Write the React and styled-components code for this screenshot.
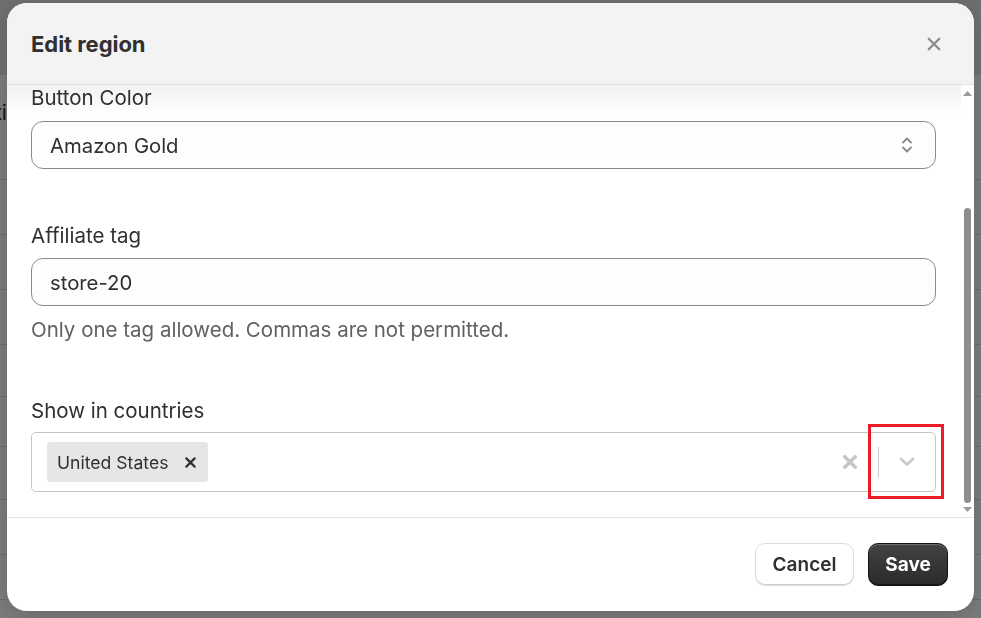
import React from 'react';
import styled, { createGlobalStyle } from 'styled-components';

const Global = createGlobalStyle`
  html, body { margin: 0; padding: 0; }
  body {
    width: 981px; height: 618px; overflow: hidden;
    font-family: Inter, "Noto Sans", Arial, sans-serif;
    background: #fff;
  }
  #root { width: 981px; height: 618px; position: relative; }
`;

/* ---------- underlying page (dimmed) ---------- */
const Page = styled.div`
  width: 981px; height: 618px;
  display: flex; flex-direction: column;
  background: #fff; overflow: hidden;
`;
const PageTop = styled.div`
  height: 75px; flex-shrink: 0; background: #e6e6e6;
`;
const PageRow = styled.div`
  height: ${p => p.$h}px; flex-shrink: 0; box-sizing: border-box;
  border-bottom: 1px solid #dedede;
  display: flex; align-items: flex-start;
  padding-top: ${p => p.$pt || 0}px;
  font-size: 21px; line-height: 24px; color: #303030;
`;
const PageHeading = styled.span`
  margin-left: -5px;
`;

/* ---------- overlay + modal ---------- */
const Backdrop = styled.div`
  position: fixed; inset: 0;
  background: rgba(0, 0, 0, 0.52);
  display: flex;
  padding: 3px 7px 7px 7px;
  box-sizing: border-box;
`;
const Modal = styled.div`
  flex: 1;
  background: #fff;
  border-radius: 20px;
  overflow: hidden;
  display: flex; flex-direction: column;
  box-shadow: 0 4px 20px rgba(0,0,0,0.15);
`;
const Header = styled.div`
  height: 82px; box-sizing: border-box; flex-shrink: 0;
  background: #f3f3f3;
  border-bottom: 1px solid #e3e3e3;
  display: flex; align-items: center; justify-content: space-between;
  padding: 0 33px 0 24px;
`;
const Title = styled.h2`
  margin: 0; font-size: 22px; font-weight: 700; color: #303030;
  letter-spacing: -0.05px;
`;
const CloseBtn = styled.button`
  border: 0; background: none; padding: 0; margin-top: 1px;
  width: 14px; height: 14px; display: flex; cursor: pointer;
`;
const Body = styled.div`
  height: 433px; box-sizing: border-box; flex-shrink: 0;
  border-bottom: 1px solid #e3e3e3;
  display: flex;
`;
const Content = styled.div`
  flex: 1; position: relative; overflow: hidden;
  padding: 1px 25px 0 24px;
  display: flex; flex-direction: column;
`;
const TopFade = styled.div`
  position: absolute; left: 0; right: 0; top: 0; height: 32px;
  background: linear-gradient(rgba(0,0,0,0.05), rgba(0,0,0,0));
  pointer-events: none;
`;
const Field = styled.div`
  display: flex; flex-direction: column;
  margin-top: ${p => p.$mt || 0}px;
`;
const Label = styled.label`
  font-size: 20.5px; line-height: 24px; color: #303030;
  margin-bottom: ${p => p.$mb}px;
`;
const TextBox = styled.div`
  height: 48px; box-sizing: border-box;
  border: 1px solid #8a8a8a; border-radius: 12px;
  background: #fdfdfd;
  display: flex; align-items: center; justify-content: space-between;
  padding: 0 22px 0 18px;
  font-size: 20.3px; color: #303030;
`;
const Help = styled.div`
  margin-top: 12px; font-size: 20.5px; line-height: 24px; color: #616161;
`;
const MultiBox = styled.div`
  height: 60px; box-sizing: border-box;
  border: 1px solid #c4c4c4; border-radius: 5px;
  background: #fff;
  display: flex; align-items: center;
  padding: 0 0 0 15px;
`;
const Tag = styled.div`
  height: 40px; box-sizing: border-box;
  background: #e6e6e6; border-radius: 3px;
  display: flex; align-items: center; gap: 17px;
  padding: 0 12px 0 10px;
  font-size: 17.6px; color: #303030;
`;
const Spacer = styled.div` flex: 1; `;
const ClearBtn = styled.div`
  width: 36px; height: 100%; display: flex; align-items: center; justify-content: center;
`;
const Separator = styled.div`
  width: 1px; height: 31px; background: #cccccc; margin-left: 10px;
`;
const Indicator = styled.div`
  width: 56px; height: 100%; position: relative;
  display: flex; align-items: center; justify-content: center;
`;
const Highlight = styled.div`
  position: absolute; left: -11px; top: -9px;
  width: 76px; height: 75px; box-sizing: border-box;
  border: 3px solid #ea1c26;
  pointer-events: none;
`;

const ScrollTrack = styled.div`
  width: 13px; flex-shrink: 0;
  display: flex; flex-direction: column; align-items: center;
  padding-top: 6px; box-sizing: border-box;
`;
const Thumb = styled.div`
  width: 7px; height: ${p => p.$h}px; margin-top: ${p => p.$top}px;
  background: #8e8e8e; border-radius: 4px;
`;
const DownArrow = styled.div` margin-top: 4px; display: flex; `;

const Footer = styled.div`
  flex: 1;
  display: flex; align-items: center; justify-content: flex-end;
  gap: 14px; padding-right: 26px;
`;
const Button = styled.button`
  height: 43px; box-sizing: border-box;
  border-radius: 10px; font-family: inherit;
  font-size: 19px; cursor: pointer;
  padding: 0;
  ${p => p.$primary ? `
    width: 80px;
    background: linear-gradient(#434343, #2a2a2a);
    color: #fff; font-weight: 700;
    border: 1px solid #111;
    box-shadow: inset 0 1px 0 rgba(255,255,255,0.22), inset 0 -1px 0 rgba(0,0,0,0.4);
  ` : `
    width: 99px;
    background: #fff;
    color: #303030; font-weight: 600;
    border: 1px solid #dcdcdc;
    box-shadow: inset 0 -1px 0 #cfcfcf;
  `}
`;

/* ---------- icons ---------- */
const XIcon = ({ size, color, w }) => (
  <svg width={size} height={size} viewBox="0 0 12 12" fill="none">
    <path d="M1.5 1.5 L10.5 10.5 M10.5 1.5 L1.5 10.5" stroke={color} strokeWidth={w} strokeLinecap="round" />
  </svg>
);
const UpDown = () => (
  <svg width="12" height="20" viewBox="0 0 12 20" fill="none">
    <path d="M2 7.5 L6 3.5 L10 7.5" stroke="#8a8a8a" strokeWidth="1.8" strokeLinecap="round" strokeLinejoin="round" />
    <path d="M2 12.5 L6 16.5 L10 12.5" stroke="#8a8a8a" strokeWidth="1.8" strokeLinecap="round" strokeLinejoin="round" />
  </svg>
);
const ChevronDown = () => (
  <svg width="16" height="10" viewBox="0 0 16 10" fill="none">
    <path d="M2 2 L8 7.5 L14 2" stroke="#c8c8c8" strokeWidth="2.6" strokeLinecap="round" strokeLinejoin="round" />
  </svg>
);
const Tri = ({ up, color }) => (
  <svg width="9" height="5" viewBox="0 0 9 5">
    <path d={up ? 'M0 5 L4.5 0 L9 5 Z' : 'M0 0 L9 0 L4.5 5 Z'} fill={color} />
  </svg>
);

export default function App() {
  return (
    <>
      <Global />
      <Page>
        <PageTop />
        <PageRow $h={105} $pt={26}><PageHeading>ti</PageHeading></PageRow>
        <PageRow $h={55} />
        <PageRow $h={55} />
        <PageRow $h={55} />
        <PageRow $h={52} />
        <PageRow $h={50} />
        <PageRow $h={53} />
        <PageRow $h={55} />
        <PageRow $h={45} />
      </Page>
      <Backdrop>
        <Modal role="dialog" aria-label="Edit region">
          <Header>
            <Title>Edit region</Title>
            <CloseBtn aria-label="Close"><XIcon size={14} color="#8a8a8a" w={1.9} /></CloseBtn>
          </Header>
          <Body>
            <Content>
              <Field>
                <Label $mb={11}>Button Color</Label>
                <TextBox>
                  <span>Amazon Gold</span>
                  <UpDown />
                </TextBox>
              </Field>
              <Field $mt={55}>
                <Label $mb={10}>Affiliate tag</Label>
                <TextBox><span>store-20</span></TextBox>
                <Help>Only one tag allowed. Commas are not permitted.</Help>
              </Field>
              <Field $mt={57}>
                <Label $mb={9}>Show in countries</Label>
                <MultiBox>
                  <Tag>
                    <span>United States</span>
                    <XIcon size={11} color="#303030" w={2.4} />
                  </Tag>
                  <Spacer />
                  <ClearBtn><XIcon size={14} color="#c6c6c6" w={3} /></ClearBtn>
                  <Separator />
                  <Indicator>
                    <ChevronDown />
                    <Highlight />
                  </Indicator>
                </MultiBox>
              </Field>
              <TopFade />
            </Content>
            <ScrollTrack>
              <Tri up color="#9a9a9a" />
              <Thumb $top={112} $h={295} />
              <DownArrow><Tri color="#9a9a9a" /></DownArrow>
            </ScrollTrack>
          </Body>
          <Footer>
            <Button>Cancel</Button>
            <Button $primary>Save</Button>
          </Footer>
        </Modal>
      </Backdrop>
    </>
  );
}
